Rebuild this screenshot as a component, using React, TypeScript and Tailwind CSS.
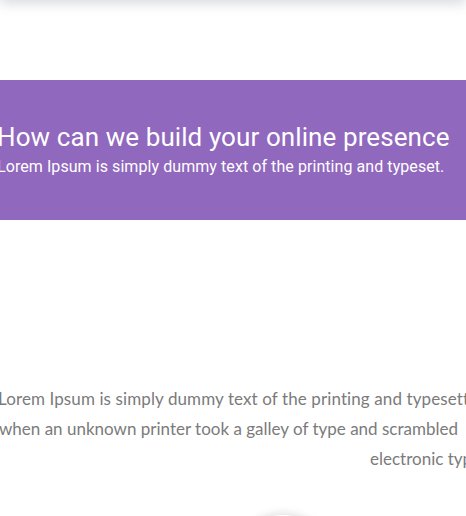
import React from "react";

export default function App() {
  return (
    <div className="w-[466px] h-[516px] overflow-hidden bg-white relative">
      <div className="h-[14px] -mt-[14px] shadow-[0_2px_14px_rgba(60,70,90,0.25)] bg-white" />
      <div className="h-[80px]" />
      <section className="h-[140px] bg-[#9068bd] text-white flex flex-col justify-center -ml-[3px]" style={{ fontFamily: "Roboto, sans-serif" }}>
        <h2 className="text-[26px] leading-[32px] tracking-[0.09px] whitespace-nowrap -mt-[1px]">How can we build your online presence</h2>
        <p className="text-[16px] leading-[24px] tracking-[0.07px] whitespace-nowrap mt-[2px]">Lorem Ipsum is simply dummy text of the printing and typeset.</p>
      </section>
      <div className="h-[164px]" />
      <div className="text-[#7b7b7b] text-[17px] leading-[30px] whitespace-nowrap -ml-[2px]" style={{ fontFamily: "Lato, sans-serif" }}>
        <p className="tracking-[0.1px]">Lorem Ipsum is simply dummy text of the printing and typesetting industry.</p>
        <p className="ml-[1px]">when an unknown printer took a galley of type and scrambled <span className="ml-[6px]">it to make a type specimen book.</span></p>
        <p className="ml-[372px]">electronic typesetting, remaining essentially unchanged.</p>
      </div>
      <div className="flex justify-center pl-[100px] mt-[41px]">
        <div className="w-[100px] h-[100px] rounded-full bg-white shadow-[0_-2px_8px_rgba(0,0,0,0.12)]" />
      </div>
    </div>
  );
}
